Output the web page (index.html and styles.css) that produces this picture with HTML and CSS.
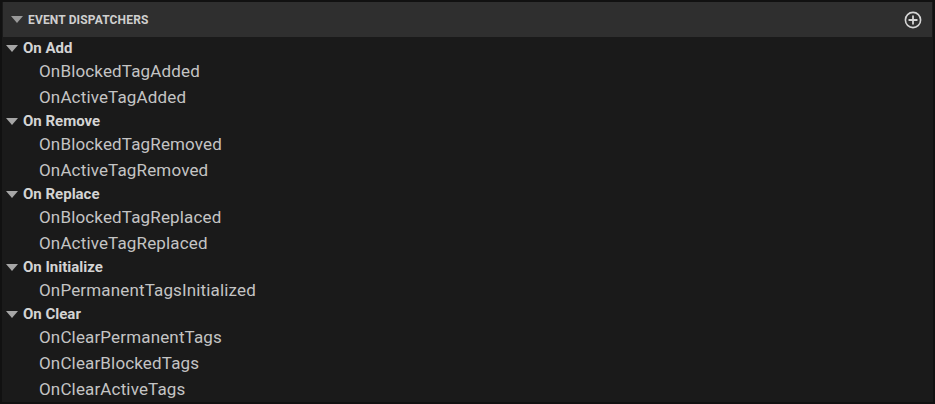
FILE: index.html
```html
<!DOCTYPE html>
<html>
<head>
<meta charset="utf-8">
<link rel="stylesheet" href="styles.css">
</head>
<body>
<div class="panel">
  <div class="header">
    <span class="tri tri-head"></span>
    <span class="title">EVENT DISPATCHERS</span>
    <svg class="add" width="18" height="18" viewBox="0 0 18 18">
      <circle cx="9" cy="9" r="7.6" fill="none" stroke="#d6d6d6" stroke-width="1.6"/>
      <path d="M9 5.2V12.8M5.2 9H12.8" stroke="#d6d6d6" stroke-width="1.8" stroke-linecap="round"/>
    </svg>
  </div>
  <div class="list">
    <div class="cat"><span class="tri"></span>On Add</div>
    <div class="item">OnBlockedTagAdded</div>
    <div class="item">OnActiveTagAdded</div>
    <div class="cat"><span class="tri"></span>On Remove</div>
    <div class="item">OnBlockedTagRemoved</div>
    <div class="item">OnActiveTagRemoved</div>
    <div class="cat"><span class="tri"></span>On Replace</div>
    <div class="item">OnBlockedTagReplaced</div>
    <div class="item">OnActiveTagReplaced</div>
    <div class="cat"><span class="tri"></span>On Initialize</div>
    <div class="item">OnPermanentTagsInitialized</div>
    <div class="cat"><span class="tri"></span>On Clear</div>
    <div class="item">OnClearPermanentTags</div>
    <div class="item">OnClearBlockedTags</div>
    <div class="item">OnClearActiveTags</div>
  </div>
</div>
</body>
</html>
```
FILE: styles.css
```css
html, body {
  margin: 0;
  padding: 0;
  background: #111111;
}
.panel {
  width: 935px;
  height: 404px;
  box-sizing: border-box;
  border: 2px solid #111111;
  background: #1a1a1a;
  font-family: Roboto, "Noto Sans", sans-serif;
  overflow: hidden;
  display: flex;
  flex-direction: column;
}
.header {
  height: 35px;
  flex: none;
  background: #2f2f2f;
  margin: 0 1px;
  display: flex;
  align-items: center;
  padding-left: 8px;
  padding-right: 10px;
}
.title {
  color: #cfcfcf;
  font-weight: 700;
  font-size: 12px;
  letter-spacing: 0.15px;
  margin-left: 5px;
}
.add {
  margin-left: auto;
  display: block;
}
.tri {
  display: inline-block;
  width: 0;
  height: 0;
  border-left: 6px solid transparent;
  border-right: 6px solid transparent;
  border-top: 7px solid #a6a6a6;
}
.tri-head {
  border-top-color: #9a9a9a;
}
.list {
  display: flex;
  flex-direction: column;
}
.cat {
  height: 21px;
  display: flex;
  align-items: center;
  padding-left: 4px;
  color: #d4d4d4;
  font-weight: 700;
  font-size: 15px;
}
.cat .tri {
  margin-right: 5px;
  margin-top: 1px;
}
.item {
  height: 26px;
  display: flex;
  align-items: center;
  padding-left: 37px;
  padding-bottom: 1px;
  box-sizing: border-box;
  color: #c4c4c4;
  font-size: 17px;
  letter-spacing: 0.15px;
}
```
